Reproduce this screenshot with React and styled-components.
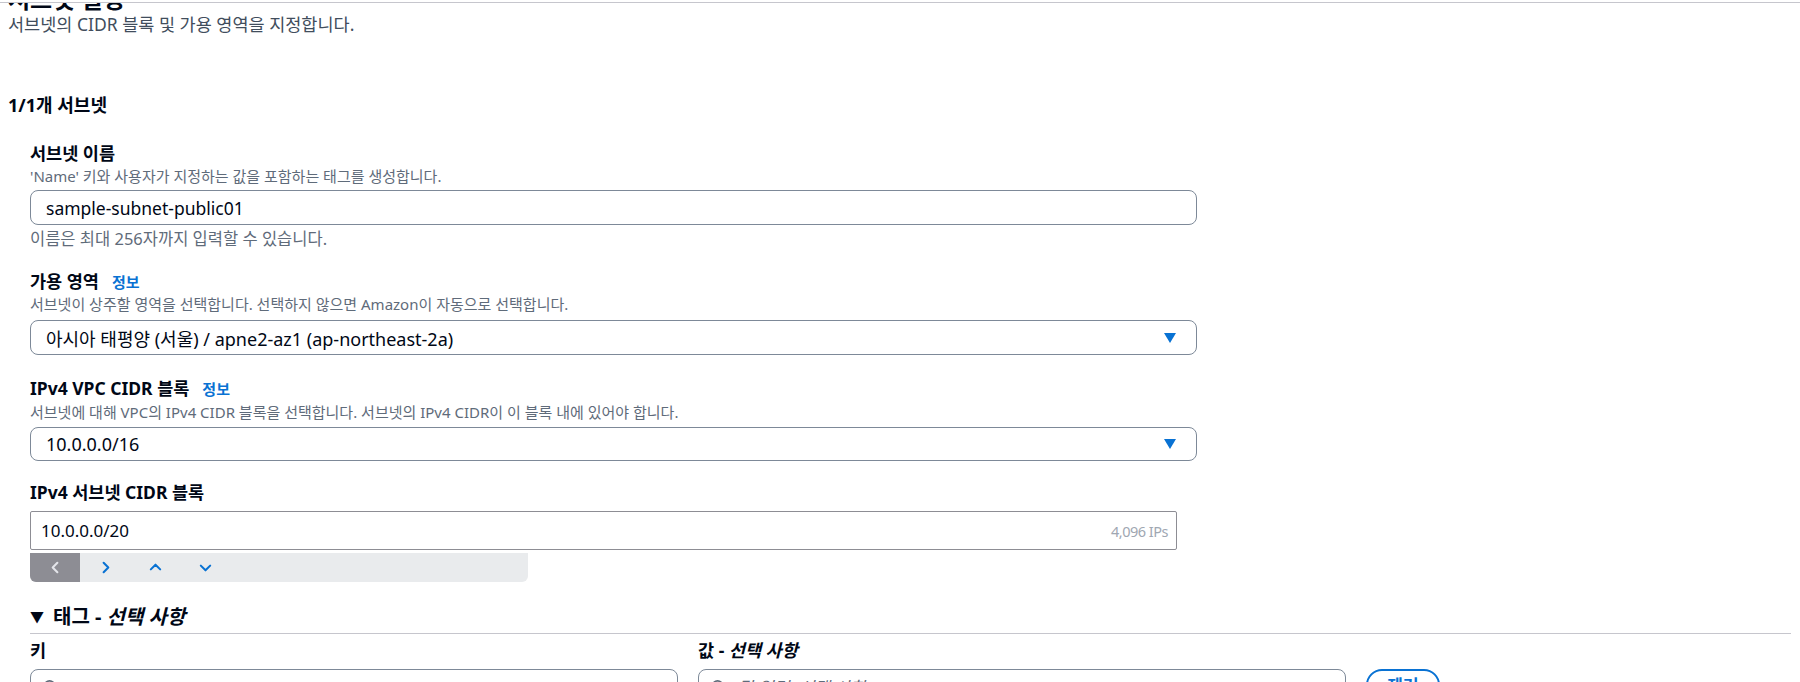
import React from 'react';
import styled, { createGlobalStyle } from 'styled-components';

const GlobalStyle = createGlobalStyle`
  html, body {
    margin: 0;
    padding: 0;
    background: #fff;
  }
  body {
    font-family: "Noto Sans", "Noto Sans CJK KR", sans-serif;
    color: #000716;
    overflow: hidden;
  }
`;

const TopEdge = styled.div`
  position: fixed;
  top: 0;
  left: 0;
  right: 0;
  height: 2px;
  background: #fff;
  border-bottom: 1px solid #c6c6cd;
  z-index: 5;
`;

const Page = styled.main`
  padding: 0 9px 40px 8px;
`;

const Header = styled.header`
  margin-top: -15px;
`;

const Title = styled.h2`
  margin: 0;
  font-size: 24px;
  line-height: 28px;
  font-weight: 700;
`;

const Lead = styled.p`
  margin: 0;
  font-size: 17.5px;
  line-height: 22px;
  color: #414d5c;
`;

const SectionTitle = styled.h3`
  margin: 59px 0 0;
  font-size: 18px;
  line-height: 22px;
  font-weight: 700;
`;

const Fields = styled.div`
  padding-left: 22px;
`;

const Field = styled.div`
  margin-top: ${(p) => p.$top}px;
`;

const LabelRow = styled.div`
  display: flex;
  align-items: baseline;
  gap: 13px;
`;

const Label = styled.label`
  font-size: 17.5px;
  line-height: 22px;
  font-weight: 700;
`;

const Info = styled.a`
  font-size: 15px;
  font-weight: 700;
  color: #0972d3;
  text-decoration: none;
`;

const Hint = styled.div`
  margin-top: ${(p) => p.$top || 0}px;
  font-size: ${(p) => p.$size || 15}px;
  line-height: 20px;
  color: #5f6b7a;
`;

const Control = styled.div`
  margin-top: ${(p) => p.$top}px;
  width: ${(p) => p.$width}px;
`;

const TextInput = styled.input`
  box-sizing: border-box;
  display: block;
  width: 100%;
  height: 35px;
  margin: 0;
  padding: 0 15px;
  border: 1px solid #7d8998;
  border-radius: 8px;
  font: inherit;
  font-size: 17.5px;
  color: #000716;
  background: #fff;
  outline: none;
`;

const SelectBox = styled.div`
  box-sizing: border-box;
  display: flex;
  align-items: center;
  justify-content: space-between;
  height: ${(p) => p.$height || 35}px;
  padding: 0 20px 0 15px;
  border: 1px solid #7d8998;
  border-radius: 8px;
  font-size: 18px;
  background: #fff;
`;

const Caret = styled.svg`
  width: 12px;
  height: 10px;
  fill: #0972d3;
`;

const CidrInput = styled.div`
  box-sizing: border-box;
  display: flex;
  align-items: center;
  justify-content: space-between;
  height: 39px;
  padding: 0 8px 0 10px;
  border: 1px solid #8d8d94;
  border-radius: 2px;
  font-size: 17px;
`;

const IpCount = styled.span`
  font-size: 14.5px;
  color: #a0a7b2;
  letter-spacing: -0.5px;
`;

const Toolbar = styled.div`
  display: flex;
  width: 498px;
  height: 29px;
  margin-top: 3px;
  background: #e9ebed;
  border-radius: 0 0 6px 6px;
  overflow: hidden;
`;

const ToolButton = styled.button`
  display: flex;
  align-items: center;
  justify-content: center;
  width: 50px;
  height: 100%;
  padding: 0;
  border: 0;
  background: ${(p) => (p.$active ? '#8d8d94' : 'transparent')};
  color: ${(p) => (p.$active ? '#e4e5ea' : '#0972d3')};
  svg {
    width: 15px;
    height: 15px;
  }
`;

const TagsHeader = styled.div`
  display: flex;
  align-items: center;
  gap: 9px;
  margin-top: 23px;
  padding-bottom: 4px;
  border-bottom: 1px solid #c6c6cd;
  font-size: 20px;
  line-height: 24px;
  font-weight: 700;
  em {
    font-style: italic;
  }
`;

const Triangle = styled.span`
  font-size: 14px;
`;

const TagGrid = styled.div`
  display: grid;
  grid-template-columns: 648px 648px auto;
  column-gap: 20px;
  row-gap: 8px;
  margin-top: 5px;
  align-items: start;
  em {
    font-style: italic;
  }
`;

const SearchSelect = styled.div`
  box-sizing: border-box;
  display: flex;
  align-items: center;
  gap: 12px;
  height: 35px;
  padding: 0 16px 0 12px;
  border: 1px solid #7d8998;
  border-radius: 8px;
  color: #5f6b7a;
  font-size: 17px;
  font-style: italic;
  span {
    flex: 1;
  }
  svg {
    width: 15px;
    height: 15px;
  }
`;

const RemoveButton = styled.button`
  box-sizing: border-box;
  height: 32px;
  width: 74px;
  padding: 2px 16px 0;
  border: 2px solid #0972d3;
  border-radius: 20px;
  background: #fff;
  color: #0972d3;
  font: inherit;
  font-size: 17px;
  line-height: 22px;
  font-weight: 700;
  align-self: start;
`;

const Chevron = ({ d }) => (
  <svg viewBox="0 0 16 16" fill="none" stroke="currentColor" strokeWidth="2.2" strokeLinecap="round" strokeLinejoin="round">
    <path d={d} />
  </svg>
);

const SelectField = ({ value, height }) => (
  <SelectBox $height={height}>
    <span>{value}</span>
    <Caret viewBox="0 0 12 10">
      <path d="M0 0h12L6 10z" />
    </Caret>
  </SelectBox>
);

const SearchIcon = () => (
  <svg viewBox="0 0 16 16" fill="none" stroke="#5f6b7a" strokeWidth="2">
    <circle cx="7" cy="7" r="5" />
    <path d="M11 11l4 4" />
  </svg>
);

const DownIcon = () => (
  <svg viewBox="0 0 16 16" fill="none" stroke="#0972d3" strokeWidth="2" strokeLinecap="round" strokeLinejoin="round">
    <path d="M3 5l5 5 5-5" />
  </svg>
);

export default function App() {
  return (
    <>
      <GlobalStyle />
      <TopEdge />
      <Page>
        <Header>
          <Title>서브넷 설정</Title>
          <Lead>서브넷의 CIDR 블록 및 가용 영역을 지정합니다.</Lead>
        </Header>

        <SectionTitle>1/1개 서브넷</SectionTitle>

        <Fields>
          <Field $top={26}>
            <LabelRow>
              <Label>서브넷 이름</Label>
            </LabelRow>
            <Hint $top={2}>'Name' 키와 사용자가 지정하는 값을 포함하는 태그를 생성합니다.</Hint>
            <Control $top={4} $width={1167}>
              <TextInput readOnly value="sample-subnet-public01" />
            </Control>
            <Hint $top={4} $size={16.5}>이름은 최대 256자까지 입력할 수 있습니다.</Hint>
          </Field>

          <Field $top={21}>
            <LabelRow>
              <Label>가용 영역</Label>
              <Info href="#">정보</Info>
            </LabelRow>
            <Hint $top={2}>서브넷이 상주할 영역을 선택합니다. 선택하지 않으면 Amazon이 자동으로 선택합니다.</Hint>
            <Control $top={6} $width={1167}>
              <SelectField value="아시아 태평양 (서울) / apne2-az1 (ap-northeast-2a)" />
            </Control>
          </Field>

          <Field $top={22}>
            <LabelRow>
              <Label>IPv4 VPC CIDR 블록</Label>
              <Info href="#">정보</Info>
            </LabelRow>
            <Hint $top={3}>서브넷에 대해 VPC의 IPv4 CIDR 블록을 선택합니다. 서브넷의 IPv4 CIDR이 이 블록 내에 있어야 합니다.</Hint>
            <Control $top={5} $width={1167}>
              <SelectField value="10.0.0.0/16" height={34} />
            </Control>
          </Field>

          <Field $top={20}>
            <LabelRow>
              <Label>IPv4 서브넷 CIDR 블록</Label>
            </LabelRow>
            <Control $top={8} $width={1147}>
              <CidrInput>
                <span>10.0.0.0/20</span>
                <IpCount>4,096 IPs</IpCount>
              </CidrInput>
            </Control>
            <Toolbar>
              <ToolButton $active aria-label="이전">
                <Chevron d="M10 3L5 8l5 5" />
              </ToolButton>
              <ToolButton aria-label="다음">
                <Chevron d="M6 3l5 5-5 5" />
              </ToolButton>
              <ToolButton aria-label="증가">
                <Chevron d="M3 10l5-5 5 5" />
              </ToolButton>
              <ToolButton aria-label="감소">
                <Chevron d="M3 6l5 5 5-5" />
              </ToolButton>
            </Toolbar>
          </Field>

          <TagsHeader>
            <Triangle>▼</Triangle>
            <span>
              태그 - <em>선택 사항</em>
            </span>
          </TagsHeader>

          <TagGrid>
            <Label>키</Label>
            <Label>
              값 - <em>선택 사항</em>
            </Label>
            <span />
            <SearchSelect>
              <SearchIcon />
              <span />
              <DownIcon />
            </SearchSelect>
            <SearchSelect>
              <SearchIcon />
              <span>값 입력 (선택 사항)</span>
              <DownIcon />
            </SearchSelect>
            <RemoveButton>제거</RemoveButton>
          </TagGrid>
        </Fields>
      </Page>
    </>
  );
}
